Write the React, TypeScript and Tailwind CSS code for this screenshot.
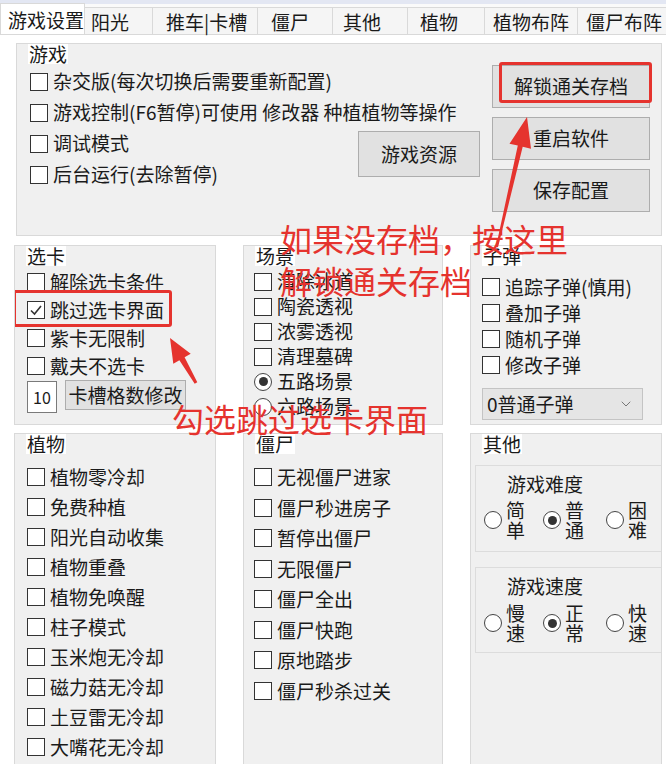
import { ChevronDown } from 'lucide-react';

type CheckProps = { label: string; checked?: boolean; h: string };

function Box({ checked }: { checked?: boolean }) {
  return (
    <span className="w-[18px] h-[18px] shrink-0 border-[1.5px] border-[#333] bg-white flex items-center justify-center">
      {checked && (
        <svg width="14" height="14" viewBox="0 0 14 14">
          <path d="M2 7.5 L5.5 11 L12 3" fill="none" stroke="#333" strokeWidth="1.6" />
        </svg>
      )}
    </span>
  );
}

function Check({ label, checked, h }: CheckProps) {
  return (
    <div className={`flex items-center gap-[5px] whitespace-nowrap ${h}`}>
      <Box checked={checked} />
      <span>{label}</span>
    </div>
  );
}

function Radio({ on }: { on?: boolean }) {
  return (
    <span className="w-[18px] h-[18px] shrink-0 rounded-full border-[1.5px] border-[#444] bg-white flex items-center justify-center">
      {on && <span className="w-[9px] h-[9px] rounded-full bg-[#333]" />}
    </span>
  );
}

function RadioRow({ label, on }: { label: string; on?: boolean }) {
  return (
    <div className="flex items-center gap-[4px]">
      <Radio on={on} />
      <span className="flex flex-col leading-[20px] text-[19px]">
        <span>{label[0]}</span>
        <span>{label[1]}</span>
      </span>
    </div>
  );
}

function Group({ title, className, children }: { title: string; className: string; children: React.ReactNode }) {
  return (
    <div className={`border border-[#d9d9d9] bg-[#f0f0f0] flex flex-col overflow-hidden ${className}`}>
      <div className="ml-[11px] w-fit bg-white px-[1px] h-[20px] leading-[20px] text-[19px]">{title}</div>
      {children}
    </div>
  );
}

function Btn({ label, className }: { label: string; className: string }) {
  return (
    <div className={`bg-[#e1e1e1] border border-[#adadad] flex items-center justify-center ${className}`}>
      {label}
    </div>
  );
}

const tabs = [
  { label: '阳光', w: 'w-[68px]', pl: 'pl-[6px]' },
  { label: '推车|卡槽', w: 'w-[105px]', pl: 'pl-[13px]' },
  { label: '僵尸', w: 'w-[75px]', pl: 'pl-[13px]' },
  { label: '其他', w: 'w-[75px]', pl: 'pl-[10px]' },
  { label: '植物', w: 'w-[77px]', pl: 'pl-[12px]' },
  { label: '植物布阵', w: 'w-[93px]', pl: 'pl-[8px]' },
  { label: '僵尸布阵', w: 'w-[90px]', pl: 'pl-[8px]' },
];

const plants = ['植物零冷却', '免费种植', '阳光自动收集', '植物重叠', '植物免唤醒', '柱子模式', '玉米炮无冷却', '磁力菇无冷却', '土豆雷无冷却', '大嘴花无冷却'];
const zombies = ['无视僵尸进家', '僵尸秒进房子', '暂停出僵尸', '无限僵尸', '僵尸全出', '僵尸快跑', '原地踏步', '僵尸秒杀过关'];

export default function App() {
  return (
    <div className="relative w-[666px] h-[764px] overflow-hidden bg-white text-[#1a1a1a] text-[19px] font-['Noto_Sans_CJK_SC',sans-serif]">
      {/* tab strip */}
      <div className="h-[4px] bg-[#e3e7f3]" />
      <div className="h-[31px] flex items-end border-b border-[#d9d9d9] bg-[#fafafa] whitespace-nowrap">
        <div className="w-[97px] h-[31px] bg-white border-x border-t border-[#d9d9d9] pl-[7px] flex items-center leading-none">游戏设置</div>
        {tabs.map((t) => (
          <div key={t.label} className={`${t.w} ${t.pl} shrink-0 h-[27px] bg-[#f5f5f5] border-r border-t border-[#d9d9d9] flex items-center leading-none`}>
            {t.label}
          </div>
        ))}
      </div>

      {/* 游戏 */}
      <Group title="游戏" className="ml-[16px] mt-[8px] w-[646px] h-[193px]">
        <div className="flex pl-[13px]">
          <div className="w-[462px] shrink-0 flex flex-col mt-[2px]">
            <Check h="h-[31px]" label="杂交版(每次切换后需要重新配置)" />
            <Check h="h-[31px]" label="游戏控制(F6暂停)可使用 修改器 种植植物等操作" />
            <div className="flex items-start">
              <div className="w-[328px] flex flex-col">
                <Check h="h-[31px]" label="调试模式" />
                <Check h="h-[31px]" label="后台运行(去除暂停)" />
              </div>
              <Btn label="游戏资源" className="w-[122px] h-[46px] mt-[3px]" />
            </div>
          </div>
          <div className="flex flex-col gap-[9px] mt-[1px]">
            <div className="relative">
              <Btn label="解锁通关存档" className="w-[158px] h-[43px]" />
              <span className="absolute left-[7px] -top-[3px] w-[153px] h-[41px] border-[3px] border-[#e5332e] rounded-[3px]" />
            </div>
            <Btn label="重启软件" className="w-[158px] h-[43px]" />
            <Btn label="保存配置" className="w-[158px] h-[43px]" />
          </div>
        </div>
      </Group>

      {/* lower groups */}
      <div className="mt-[9px] pl-[14px] grid grid-cols-[202px_200px_192px] grid-rows-[180px_340px] gap-x-[27px] gap-y-[8px]">
        <Group title="选卡" className="">
          <div className="flex flex-col pl-[12px] mt-[2px]">
            <Check h="h-[28px]" label="解除选卡条件" />
            <div className="relative">
              <Check h="h-[28px]" label="跳过选卡界面" checked />
              <span className="absolute -left-[14px] -top-[6px] w-[159px] h-[37px] border-[3px] border-[#e5332e] rounded-[3px]" />
            </div>
            <Check h="h-[28px]" label="紫卡无限制" />
            <Check h="h-[28px]" label="戴夫不选卡" />
            <div className="flex items-start gap-[8px]">
              <div className="w-[30px] h-[32px] mt-[1px] bg-white border border-[#7a7a7a] flex items-center justify-center text-[16px]">10</div>
              <Btn label="卡槽格数修改" className="w-[121px] h-[30px]" />
            </div>
          </div>
        </Group>

        <Group title="场景" className="">
          <div className="flex flex-col pl-[10px] mt-[3px]">
            <Check h="h-[25px]" label="清除冰道" />
            <Check h="h-[25px]" label="陶瓷透视" />
            <Check h="h-[25px]" label="浓雾透视" />
            <Check h="h-[25px]" label="清理墓碑" />
            <div className="flex items-center gap-[5px] h-[25px]">
              <Radio on />
              <span>五路场景</span>
            </div>
            <div className="flex items-center gap-[5px] h-[25px]">
              <Radio />
              <span>六路场景</span>
            </div>
          </div>
        </Group>

        <Group title="子弹" className="">
          <div className="flex flex-col pl-[11px] mt-[8px]">
            <Check h="h-[26px]" label="追踪子弹(慎用)" />
            <Check h="h-[26px]" label="叠加子弹" />
            <Check h="h-[26px]" label="随机子弹" />
            <Check h="h-[26px]" label="修改子弹" />
            <div className="mt-[10px] w-[161px] h-[32px] bg-[#e5e5e5] border border-[#c4c4c4] flex items-center justify-between pl-[4px] pr-[8px]">
              <span>0普通子弹</span>
              <ChevronDown size={16} color="#777" strokeWidth={1.5} />
            </div>
          </div>
        </Group>

        <Group title="植物" className="">
          <div className="flex flex-col pl-[12px] mt-[8px]">
            {plants.map((p) => (
              <Check key={p} h="h-[30px]" label={p} />
            ))}
          </div>
        </Group>

        <Group title="僵尸" className="">
          <div className="flex flex-col pl-[10px] mt-[8px]">
            {zombies.map((z) => (
              <Check key={z} h="h-[30.5px]" label={z} />
            ))}
          </div>
        </Group>

        <Group title="其他" className="">
          <div className="flex flex-col ml-[4px] mt-[11px] gap-[15px]">
            <div className="w-[190px] h-[87px] border border-[#dcdcdc] flex flex-col">
              <div className="pl-[31px] mt-[8px] h-[20px] leading-[20px]">游戏难度</div>
              <div className="flex items-center pl-[8px] mt-[6px]">
                <RadioRow label="简单" />
                <div className="ml-[18px]"><RadioRow label="普通" on /></div>
                <div className="ml-[22px]"><RadioRow label="困难" /></div>
              </div>
            </div>
            <div className="w-[190px] h-[86px] border border-[#dcdcdc] flex flex-col">
              <div className="pl-[31px] mt-[8px] h-[20px] leading-[20px]">游戏速度</div>
              <div className="flex items-center pl-[8px] mt-[7px]">
                <RadioRow label="慢速" />
                <div className="ml-[18px]"><RadioRow label="正常" on /></div>
                <div className="ml-[22px]"><RadioRow label="快速" /></div>
              </div>
            </div>
          </div>
        </Group>
      </div>

      {/* red annotations */}
      <svg className="absolute inset-0 pointer-events-none" width="666" height="764">
        <polygon points="498,247.2 496,246.8 517.8,145.6 509.5,143.7 527,117 531,148.7 522.7,146.8" fill="#e5332e" />
        <polygon points="197.3,382.3 194.7,383.8 179.4,360.3 173.3,363.8 170,338 190.7,353.8 184.6,357.3" fill="#e5332e" />
      </svg>
      <div className="absolute left-[280px] top-[221px] text-[32px] leading-[34px] text-[#e5332e] whitespace-nowrap">如果没存档，按这里</div>
      <div className="absolute left-[280px] top-[263px] text-[32px] leading-[34px] text-[#e5332e] whitespace-nowrap">解锁通关存档</div>
      <div className="absolute left-[172px] top-[401px] text-[32px] leading-[34px] text-[#e5332e] whitespace-nowrap">勾选跳过选卡界面</div>
    </div>
  );
}
